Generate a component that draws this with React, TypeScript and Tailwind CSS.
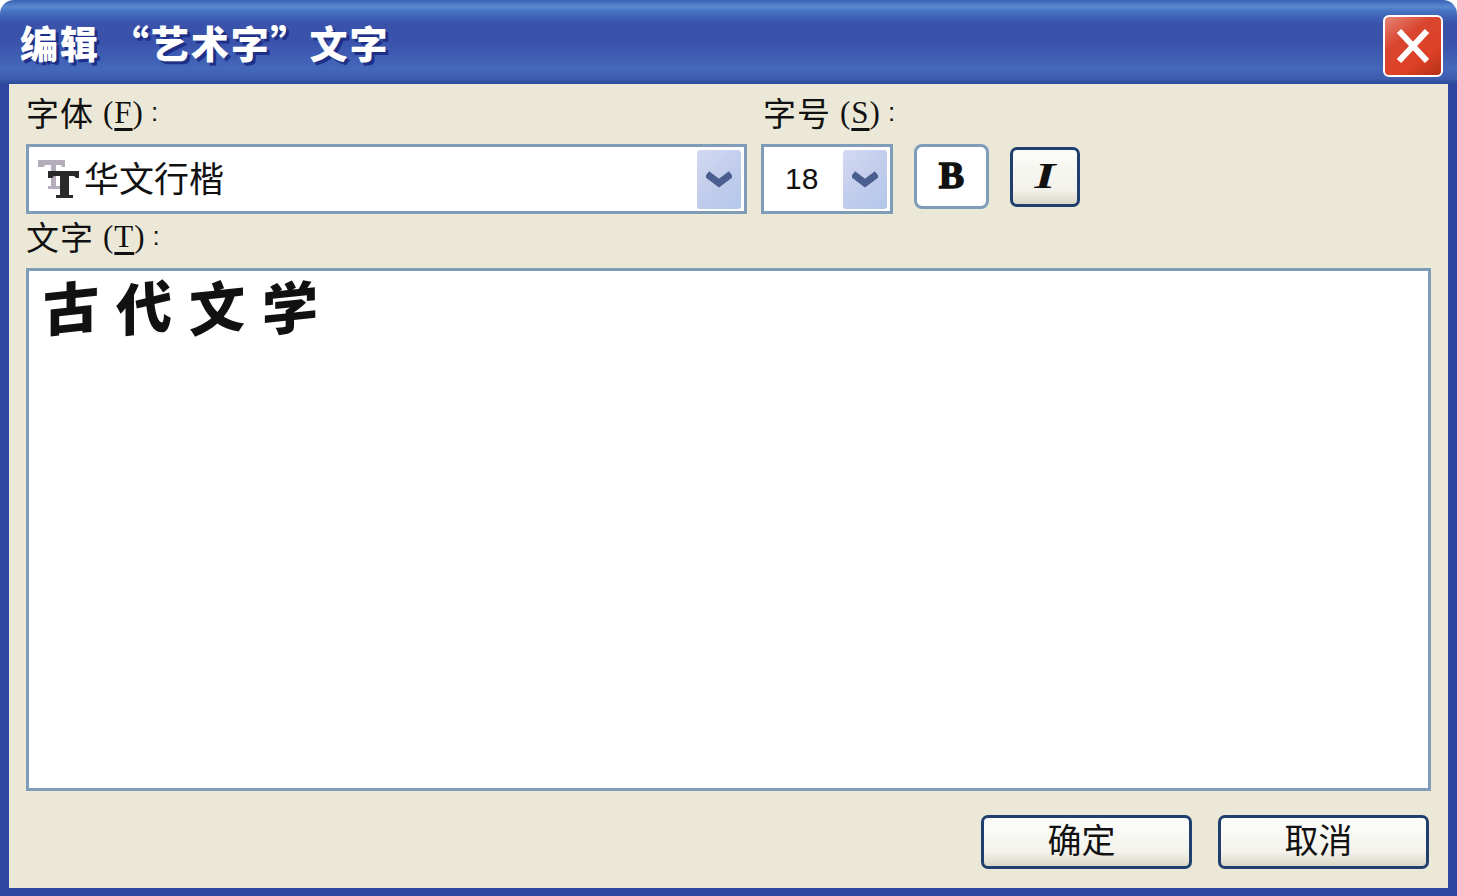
const cjk = "font-['Noto_Sans_CJK_SC','Liberation_Sans',sans-serif]";

function Chevron() {
  return (
    <svg width="26" height="18" viewBox="0 0 26 18" fill="none">
      <path d="M1 4 L13 13 L25 4" stroke="#4a5f8f" strokeWidth="7" />
    </svg>
  );
}

function DropArrow() {
  return (
    <div className="flex h-[59px] w-[44px] items-center justify-center rounded-[3px] bg-[linear-gradient(135deg,#d3daf2,#c2cdec_50%,#b3c7ea)]">
      <Chevron />
    </div>
  );
}

function FieldLabel({ text, hotkey }: { text: string; hotkey: string }) {
  return (
    <div className="flex items-center text-[33px] leading-none text-[#111]">
      <span className="tracking-[1px]">{text}</span>
      <span className="ml-[9px] font-['Liberation_Serif',serif] text-[31px] font-normal tracking-[1px]">
        (<span className="underline underline-offset-[5px]">{hotkey}</span>)
      </span>
      <span className="ml-[7px] font-['Liberation_Sans',sans-serif] text-[26px]">:</span>
    </div>
  );
}

function FontIcon() {
  return (
    <svg width="42" height="38" viewBox="0 0 42 38" className="shrink-0">
      <path d="M0 0h27v7h-3l-1-2h-5v21h4v3H10v-3h3V5H7L6 7H0z" fill="#b5adbc" />
      <path d="M10 11h31v7h-3l-2-2h-5v19h4v3H18v-3h4V16h-6l-2 2h-4z" fill="#2a2a2a" />
    </svg>
  );
}

function DialogButton({ label }: { label: string }) {
  return (
    <button className="flex h-[54px] w-[211px] items-center justify-center rounded-[7px] border-[3px] border-[#1f3f6e] bg-[linear-gradient(180deg,#fdfdfb,#f4f3ec_70%,#dcd8c8)] pb-[6px] pr-[10px] text-[34px] leading-none text-[#111]">
      {label}
    </button>
  );
}

export default function App() {
  return (
    <div className={`flex h-[896px] w-[1457px] flex-col overflow-hidden bg-white ${cjk}`}>
      <div className="flex h-[84px] shrink-0 items-center justify-between rounded-t-[14px] bg-[linear-gradient(180deg,#3a62b4_0%,#5a88d0_8%,#4570c0_14%,#3a52aa_28%,#3a52aa_50%,#4468ba_82%,#3d5cae_94%,#2c4a9c_100%)] pl-[20px] pr-[14px]">
        <h1 className="text-[38px] leading-none font-black tracking-[2px] text-white [text-shadow:3px_3px_0_#1d2f86]">
          编辑 “艺术字<span className="mr-[7px] [font-feature-settings:'palt']">”</span> 文字
        </h1>
        <button className="mt-[7px] flex h-[62px] w-[60px] items-center justify-center rounded-[6px] border-2 border-white bg-[linear-gradient(145deg,#e58476,#d9452f_35%,#dd4126_70%,#b23016)]">
          <svg width="36" height="36" viewBox="0 0 36 36">
            <path d="M4 3 L32 33 M32 3 L4 33" stroke="#fff" strokeWidth="6" />
          </svg>
        </button>
      </div>

      <div className="flex min-h-0 flex-1 flex-col border-x-[9px] border-b-[8px] border-[#2f47a0] bg-[#ebe8d7] px-[17px]">
        <div className="flex h-[60px] shrink-0 items-center pb-[4px]">
          <div className="w-[737px]">
            <FieldLabel text="字体" hotkey="F" />
          </div>
          <FieldLabel text="字号" hotkey="S" />
        </div>

        <div className="flex h-[70px] shrink-0 items-start">
          <div className="flex h-[70px] w-[721px] items-center justify-between border-[3px] border-[#7f9db9] bg-white pl-[9px] pr-[3px]">
            <div className="flex items-center gap-[4px]">
              <FontIcon />
              <span className="pb-[6px] text-[35px] leading-none text-[#111]">华文行楷</span>
            </div>
            <DropArrow />
          </div>
          <div className="ml-[14px] flex h-[70px] w-[132px] items-center justify-between border-[3px] border-[#7f9db9] bg-white pl-[21px] pr-[3px]">
            <span className="font-['Liberation_Sans',sans-serif] text-[30px] leading-none text-[#111]">18</span>
            <DropArrow />
          </div>
          <button className="ml-[21px] flex h-[65px] w-[75px] items-center justify-center rounded-[8px] border-[3px] border-[#7f9db9] bg-white pb-[3px] font-['Liberation_Serif',serif] text-[38px] leading-none font-bold text-[#111] [-webkit-text-stroke:1.5px_#111]">
            B
          </button>
          <button className="ml-[21px] mt-[3px] flex h-[60px] w-[70px] items-center justify-center rounded-[7px] border-[3px] border-[#1f3f6e] bg-[linear-gradient(180deg,#fbfbf8,#f2f1ea_75%,#dcd8c8)] pb-[2px] font-['Liberation_Serif',serif] text-[36px] leading-none font-bold italic text-[#111]">
            <span className="inline-block scale-x-150">I</span>
          </button>
        </div>

        <div className="flex h-[54px] shrink-0 items-center pb-[10px]">
          <FieldLabel text="文字" hotkey="T" />
        </div>

        <div className="flex min-h-0 flex-1 items-start gap-[17px] border-[3px] border-[#7f9db9] bg-white pl-[14px]">
          {["古", "代", "文", "学"].map((ch) => (
            <span key={ch} className="inline-block -skew-y-6 text-[56px] leading-[68px] font-black text-[#111]">
              {ch}
            </span>
          ))}
        </div>

        <div className="flex h-[97px] shrink-0 justify-end gap-[26px] pr-[2px] pt-[24px]">
          <DialogButton label="确定" />
          <DialogButton label="取消" />
        </div>
      </div>
    </div>
  );
}
